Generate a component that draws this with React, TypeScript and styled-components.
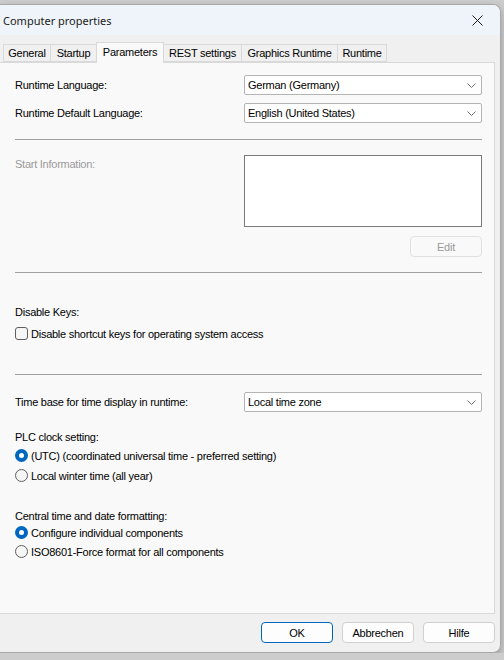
import React from "react";
import styled, { createGlobalStyle } from "styled-components";

const GlobalStyle = createGlobalStyle`
  html, body {
    margin: 0;
    padding: 0;
    background: #cdcdcd;
    font-family: "Liberation Sans", Arial, sans-serif;
    font-size: 11px;
    letter-spacing: -0.25px;
    color: #000;
  }
`;

const Window = styled.div`
  width: 500px;
  height: 647px;
  margin-top: 4px;
  display: flex;
  flex-direction: column;
  background: #f0f0f0;
  border: 1px solid #a8a8a8;
  border-left: none;
  border-radius: 0 8px 8px 0;
  overflow: hidden;
  box-shadow: 0 4px 10px rgba(0, 0, 0, 0.25);
`;

const TitleBar = styled.div`
  height: 30px;
  display: flex;
  align-items: center;
  justify-content: space-between;
  background: #eef4f9;
  padding-left: 3px;
`;

const Title = styled.span`
  font-family: "Noto Sans", "Segoe UI", sans-serif;
  font-size: 11px;
  letter-spacing: 0;
  color: #1a1a1a;
`;

const CloseButton = styled.div`
  width: 46px;
  height: 30px;
  display: flex;
  align-items: center;
  justify-content: center;
  color: #1a1a1a;
`;

const TabStrip = styled.div`
  display: flex;
  align-items: flex-end;
  height: 20px;
  padding: 7px 0 0 3px;
  position: relative;
  z-index: 1;
`;

const Tab = styled.div<{ $w: number; $active?: boolean }>`
  width: ${({ $w }) => $w}px;
  height: ${({ $active }) => ($active ? 21 : 18)}px;
  box-sizing: border-box;
  margin-left: -1px;
  margin-bottom: ${({ $active }) => ($active ? -1 : 0)}px;
  display: flex;
  align-items: center;
  justify-content: center;
  padding-bottom: ${({ $active }) => ($active ? 2 : 0)}px;
  border: 1px solid #d9d9d9;
  border-bottom: ${({ $active }) => ($active ? "none" : "1px solid #d9d9d9")};
  background: ${({ $active }) => ($active ? "#f9f9f9" : "#f0f0f0")};
  color: #000;
  white-space: nowrap;
  &:first-child {
    margin-left: 0;
  }
`;

const TabPanel = styled.div`
  width: 495px;
  height: 552px;
  box-sizing: border-box;
  border: 1px solid #d9d9d9;
  border-left: none;
  background: #f9f9f9;
  padding: 12px 12px 0 15px;
  display: flex;
  flex-direction: column;
`;

const FieldRow = styled.div<{ $mt?: number }>`
  display: grid;
  grid-template-columns: 229px 238px;
  align-items: center;
  margin-top: ${({ $mt }) => $mt ?? 0}px;
`;

const Label = styled.span<{ $disabled?: boolean }>`
  color: ${({ $disabled }) => ($disabled ? "#9a9a9a" : "#000")};
`;

const SelectBox = styled.div<{ $h?: number }>`
  height: ${({ $h }) => $h ?? 20}px;
  box-sizing: border-box;
  border: 1px solid #b4b4b4;
  border-radius: 2px;
  background: #fff;
  display: flex;
  align-items: center;
  justify-content: space-between;
  padding: 0 5px 0 3px;
`;

const Separator = styled.div<{ $mt: number }>`
  height: 1px;
  width: 467px;
  background: #a0a0a0;
  margin-top: ${({ $mt }) => $mt}px;
`;

const TopRow = styled.div<{ $mt: number }>`
  display: grid;
  grid-template-columns: 229px 238px;
  align-items: start;
  margin-top: ${({ $mt }) => $mt}px;
`;

const InfoBox = styled.div`
  height: 72px;
  box-sizing: border-box;
  border: 1px solid #7a7a7a;
  background: #fff;
`;

const EditRow = styled.div`
  display: flex;
  justify-content: flex-end;
  width: 467px;
  margin-top: 9px;
`;

const Button = styled.div<{ $primary?: boolean; $disabled?: boolean }>`
  width: 72px;
  height: 21px;
  box-sizing: border-box;
  border: 1px solid
    ${({ $primary, $disabled }) =>
      $primary ? "#0067c0" : $disabled ? "#e0e0e0" : "#d0d0d0"};
  border-radius: 4px;
  background: ${({ $disabled }) => ($disabled ? "#f9f9f9" : "#fdfdfd")};
  color: ${({ $disabled }) => ($disabled ? "#9a9a9a" : "#000")};
  display: flex;
  align-items: center;
  justify-content: center;
`;

const SectionLabel = styled.div<{ $mt: number }>`
  margin-top: ${({ $mt }) => $mt}px;
  line-height: 15px;
`;

const OptionRow = styled.div<{ $mt: number }>`
  display: flex;
  align-items: center;
  gap: 3px;
  height: 15px;
  margin-top: ${({ $mt }) => $mt}px;
`;

const CheckBox = styled.div`
  width: 13px;
  height: 13px;
  box-sizing: border-box;
  border: 1px solid #5f5f5f;
  border-radius: 3px;
  background: #f6f6f6;
`;

const Radio = styled.div<{ $checked?: boolean }>`
  width: 13px;
  height: 13px;
  box-sizing: border-box;
  border-radius: 50%;
  border: ${({ $checked }) => ($checked ? "none" : "1px solid #5f5f5f")};
  background: ${({ $checked }) => ($checked ? "#0067c0" : "#f6f6f6")};
  display: flex;
  align-items: center;
  justify-content: center;
  &::after {
    content: "";
    display: ${({ $checked }) => ($checked ? "block" : "none")};
    width: 5px;
    height: 5px;
    border-radius: 50%;
    background: #fff;
  }
`;

const Footer = styled.div`
  display: flex;
  justify-content: flex-end;
  gap: 9px;
  width: 495px;
  margin-top: 8px;
`;

const Chevron = () => (
  <svg width="9" height="5" viewBox="0 0 9 5">
    <path d="M0.5 0.5 L4.5 4.5 L8.5 0.5" fill="none" stroke="#707070" strokeWidth="1" />
  </svg>
);

const Select: React.FC<{ value: string; h?: number }> = ({ value, h }) => (
  <SelectBox $h={h}>
    <span>{value}</span>
    <Chevron />
  </SelectBox>
);

const tabs = [
  { name: "General", w: 48 },
  { name: "Startup", w: 47 },
  { name: "Parameters", w: 68, active: true },
  { name: "REST settings", w: 79 },
  { name: "Graphics Runtime", w: 97 },
  { name: "Runtime", w: 50 },
];

export default function App() {
  return (
    <>
      <GlobalStyle />
      <Window>
        <TitleBar>
          <Title>Computer properties</Title>
          <CloseButton>
            <svg width="11" height="11" viewBox="0 0 11 11">
              <path d="M0.5 0.5 L10.5 10.5 M10.5 0.5 L0.5 10.5" stroke="#1a1a1a" strokeWidth="1" />
            </svg>
          </CloseButton>
        </TitleBar>
        <TabStrip>
          {tabs.map((t) => (
            <Tab key={t.name} $w={t.w} $active={t.active}>
              {t.name}
            </Tab>
          ))}
        </TabStrip>
        <TabPanel>
          <FieldRow>
            <Label>Runtime Language:</Label>
            <Select value="German (Germany)" />
          </FieldRow>
          <FieldRow $mt={8}>
            <Label>Runtime Default Language:</Label>
            <Select value="English (United States)" />
          </FieldRow>
          <Separator $mt={16} />
          <TopRow $mt={15}>
            <Label $disabled style={{ marginTop: 3 }}>
              Start Information:
            </Label>
            <InfoBox />
          </TopRow>
          <EditRow>
            <Button $disabled>Edit</Button>
          </EditRow>
          <Separator $mt={15} />
          <SectionLabel $mt={32}>Disable Keys:</SectionLabel>
          <OptionRow $mt={6}>
            <CheckBox />
            <span>Disable shortcut keys for operating system access</span>
          </OptionRow>
          <Separator $mt={33} />
          <FieldRow $mt={17}>
            <Label>Time base for time display in runtime:</Label>
            <Select value="Local time zone" />
          </FieldRow>
          <SectionLabel $mt={18}>PLC clock setting:</SectionLabel>
          <OptionRow $mt={3}>
            <Radio $checked />
            <span>(UTC) (coordinated universal time - preferred setting)</span>
          </OptionRow>
          <OptionRow $mt={5}>
            <Radio />
            <span>Local winter time (all year)</span>
          </OptionRow>
          <SectionLabel $mt={26}>Central time and date formatting:</SectionLabel>
          <OptionRow $mt={1}>
            <Radio $checked />
            <span>Configure individual components</span>
          </OptionRow>
          <OptionRow $mt={4}>
            <Radio />
            <span>ISO8601-Force format for all components</span>
          </OptionRow>
        </TabPanel>
        <Footer>
          <Button $primary>OK</Button>
          <Button>Abbrechen</Button>
          <Button>Hilfe</Button>
        </Footer>
      </Window>
    </>
  );
}
